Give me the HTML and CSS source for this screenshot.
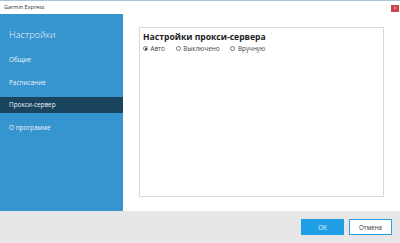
FILE: index.html
```html
<!DOCTYPE html>
<html lang="ru">
<head>
<meta charset="utf-8">
<title>Garmin Express</title>
<link rel="stylesheet" href="styles.css">
</head>
<body>
<div class="window">
  <div class="titlebar">
    <span class="title">Garmin Express</span>
    <span class="close">×</span>
  </div>
  <div class="main">
    <nav class="sidebar">
      <div class="side-head">Настройки</div>
      <ul class="menu">
        <li class="item">Общие</li>
        <li class="item">Расписание</li>
        <li class="item active">Прокси-сервер</li>
        <li class="item">О программе</li>
      </ul>
    </nav>
    <section class="content">
      <div class="panel">
        <h1 class="panel-title">Настройки прокси-сервера</h1>
        <div class="radios">
          <label class="radio"><span class="dot checked"></span>Авто</label>
          <label class="radio"><span class="dot"></span>Выключено</label>
          <label class="radio"><span class="dot"></span>Вручную</label>
        </div>
      </div>
    </section>
  </div>
  <div class="footer">
    <button class="btn primary">OK</button>
    <button class="btn secondary">Отмена</button>
  </div>
</div>
</body>
</html>
```
FILE: styles.css
```css
* { box-sizing: border-box; }
html, body { margin: 0; padding: 0; }
body {
  width: 400px;
  height: 243px;
  overflow: hidden;
  font-family: "Open Sans", "Noto Sans", sans-serif;
  background: #fff;
}
.window {
  display: flex;
  flex-direction: column;
  height: 243px;
  border-top: 1px solid #a9c6d8;
}
.titlebar {
  height: 13px;
  display: flex;
  align-items: center;
  justify-content: space-between;
  padding: 0 1px 0 4px;
  background: #fff;
}
.title {
  font-size: 5.5px;
  color: #333;
  line-height: 1;
}
.close {
  width: 8px;
  height: 7px;
  background: #c9474b;
  color: #f3c9ca;
  font-size: 6px;
  line-height: 7px;
  text-align: center;
  margin-top: 1px;
}
.main {
  display: flex;
  height: 197px;
}
.sidebar {
  width: 123px;
  background: #3694ce;
  color: #fff;
  padding-top: 15px;
}
.side-head {
  font-size: 9.3px;
  font-weight: 300;
  padding-left: 9px;
  line-height: 12px;
  color: #eef6fc;
}
.menu {
  list-style: none;
  margin: 11px 0 0;
  padding: 0;
}
.item {
  height: 16px;
  line-height: 16px;
  padding-left: 9px;
  font-size: 6.4px;
  margin-bottom: 6.5px;
  color: #e9f3fa;
}
.item.active {
  background: #1a435d;
}
.content {
  flex: 1;
  padding: 13px 16px 14px 16px;
}
.panel {
  height: 100%;
  border: 1px solid #d9d9d9;
  padding: 3px 3px;
}
.panel-title {
  margin: 0;
  font-size: 8.6px;
  font-weight: 700;
  color: #222;
  line-height: 12px;
}
.radios {
  display: flex;
  gap: 11px;
  margin-top: 1px;
}
.radio {
  display: flex;
  align-items: center;
  font-size: 6.3px;
  color: #444;
  line-height: 9px;
}
.dot {
  width: 5px;
  height: 5px;
  border: 0.6px solid #777;
  border-radius: 50%;
  margin-right: 2.5px;
  position: relative;
  background: #fff;
}
.dot.checked::after {
  content: "";
  position: absolute;
  left: 0.9px;
  top: 0.9px;
  width: 2.2px;
  height: 2.2px;
  border-radius: 50%;
  background: #222;
}
.footer {
  height: 32px;
  background: #e7e7e7;
  display: flex;
  justify-content: flex-end;
  align-items: center;
  gap: 5px;
  padding-right: 8px;
}
.btn {
  height: 16px;
  width: 43px;
  font-family: inherit;
  font-size: 6.2px;
  padding: 0;
  border: 1px solid transparent;
}
.primary {
  background: #1e9fe6;
  color: #e5f4fd;
  border-color: #1e9fe6;
}
.secondary {
  background: #fff;
  color: #333;
  border-color: #2c9ee2;
}
```
